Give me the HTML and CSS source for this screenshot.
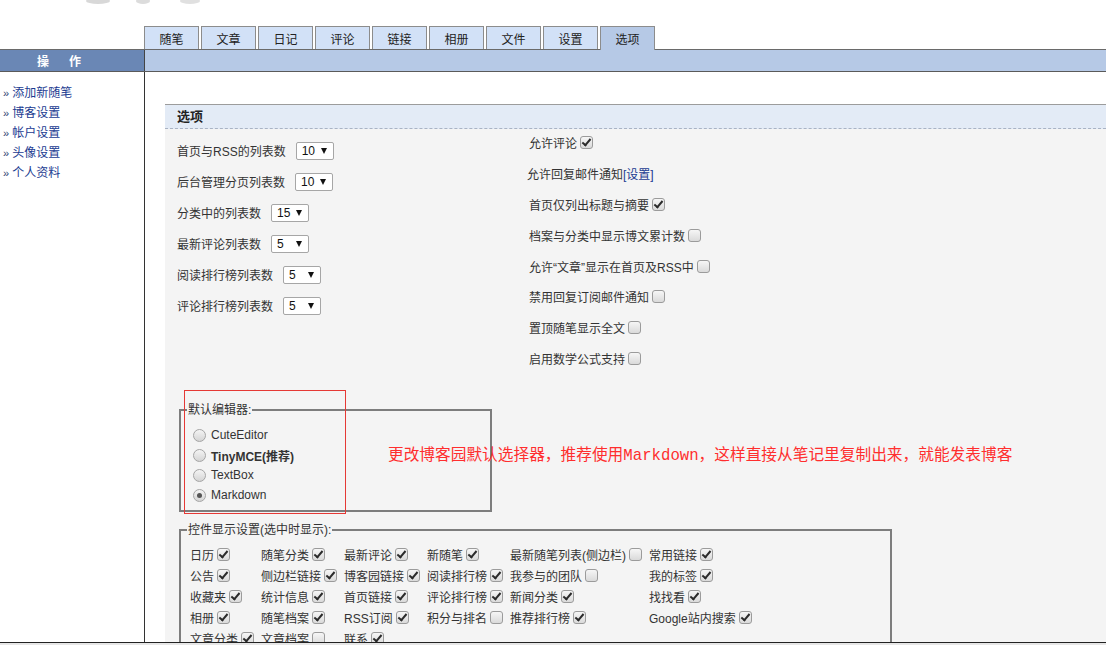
FILE: index.html
```html
<!DOCTYPE html>
<html lang="zh-CN">
<head>
<meta charset="utf-8">
<title>选项</title>
<link rel="stylesheet" href="styles.css">
</head>
<body>
<div class="logo">
  <svg class="logo-art" width="240" height="8" viewBox="0 0 240 8">
    <ellipse cx="98" cy="1" rx="12" ry="3" fill="#d8d8d8"/>
    <ellipse cx="143" cy="1" rx="7" ry="3" fill="#dcdcdc"/>
    <ellipse cx="190" cy="1" rx="10" ry="3" fill="#e0e0e0"/>
  </svg>
</div>
<div class="tabs">
  <span class="tab">随笔</span>
  <span class="tab">文章</span>
  <span class="tab">日记</span>
  <span class="tab">评论</span>
  <span class="tab">链接</span>
  <span class="tab">相册</span>
  <span class="tab">文件</span>
  <span class="tab">设置</span>
  <span class="tab active">选项</span>
</div>
<div class="bar">
  <div class="bar-left">操作</div>
  <div class="bar-right"></div>
</div>
<div class="main">
  <div class="side">
    <a href="#"><span class="r">»</span>添加新随笔</a>
    <a href="#"><span class="r">»</span>博客设置</a>
    <a href="#"><span class="r">»</span>帐户设置</a>
    <a href="#"><span class="r">»</span>头像设置</a>
    <a href="#"><span class="r">»</span>个人资料</a>
  </div>
  <div class="content">
    <div class="panel">
      <div class="phead">选项</div>
      <div class="pbody">
        <div class="cols">
          <div class="lcol">
            <div class="row"><span class="lbl">首页与RSS的列表数</span><span class="sel"><span>10</span><i></i></span></div>
            <div class="row"><span class="lbl">后台管理分页列表数</span><span class="sel"><span>10</span><i></i></span></div>
            <div class="row"><span class="lbl">分类中的列表数</span><span class="sel"><span>15</span><i></i></span></div>
            <div class="row"><span class="lbl">最新评论列表数</span><span class="sel"><span>5</span><i></i></span></div>
            <div class="row"><span class="lbl">阅读排行榜列表数</span><span class="sel"><span>5</span><i></i></span></div>
            <div class="row"><span class="lbl">评论排行榜列表数</span><span class="sel"><span>5</span><i></i></span></div>
          </div>
          <div class="rcol">
            <div class="row">允许评论<span class="cb on"></span></div>
            <div class="row shift">允许回复邮件通知<a class="lnk" href="#">[设置]</a></div>
            <div class="row">首页仅列出标题与摘要<span class="cb on"></span></div>
            <div class="row">档案与分类中显示博文累计数<span class="cb"></span></div>
            <div class="row">允许“文章”显示在首页及RSS中<span class="cb"></span></div>
            <div class="row">禁用回复订阅邮件通知<span class="cb"></span></div>
            <div class="row">置顶随笔显示全文<span class="cb"></span></div>
            <div class="row">启用数学公式支持<span class="cb"></span></div>
          </div>
        </div>
        <fieldset class="fs fs1">
          <legend>默认编辑器:</legend>
          <div class="radios">
            <div class="ritem"><span class="radio"></span>CuteEditor</div>
            <div class="ritem bold"><span class="radio"></span>TinyMCE(推荐)</div>
            <div class="ritem"><span class="radio"></span>TextBox</div>
            <div class="ritem"><span class="radio on"></span>Markdown</div>
          </div>
        </fieldset>
        <fieldset class="fs fs2">
          <legend>控件显示设置(选中时显示):</legend>
          <div class="grid">
            <div class="gi">日历<span class="cb on"></span></div>
            <div class="gi">随笔分类<span class="cb on"></span></div>
            <div class="gi">最新评论<span class="cb on"></span></div>
            <div class="gi">新随笔<span class="cb on"></span></div>
            <div class="gi">最新随笔列表(侧边栏)<span class="cb"></span></div>
            <div class="gi">常用链接<span class="cb on"></span></div>

            <div class="gi">公告<span class="cb on"></span></div>
            <div class="gi">侧边栏链接<span class="cb on"></span></div>
            <div class="gi">博客园链接<span class="cb on"></span></div>
            <div class="gi">阅读排行榜<span class="cb on"></span></div>
            <div class="gi">我参与的团队<span class="cb"></span></div>
            <div class="gi">我的标签<span class="cb on"></span></div>

            <div class="gi">收藏夹<span class="cb on"></span></div>
            <div class="gi">统计信息<span class="cb on"></span></div>
            <div class="gi">首页链接<span class="cb on"></span></div>
            <div class="gi">评论排行榜<span class="cb on"></span></div>
            <div class="gi">新闻分类<span class="cb on"></span></div>
            <div class="gi">找找看<span class="cb on"></span></div>

            <div class="gi">相册<span class="cb on"></span></div>
            <div class="gi">随笔档案<span class="cb on"></span></div>
            <div class="gi">RSS订阅<span class="cb on"></span></div>
            <div class="gi">积分与排名<span class="cb"></span></div>
            <div class="gi">推荐排行榜<span class="cb on"></span></div>
            <div class="gi">Google站内搜索<span class="cb on"></span></div>

            <div class="gi">文章分类<span class="cb on"></span></div>
            <div class="gi">文章档案<span class="cb"></span></div>
            <div class="gi">联系<span class="cb on"></span></div>
          </div>
        </fieldset>
      </div>
      <div class="anno-box"></div>
      <div class="anno-text">更改博客园默认选择器，推荐使用Markdown，这样直接从笔记里复制出来，就能发表博客</div>
    </div>
  </div>
</div>
<div class="taskbar"></div>
</body>
</html>
```

FILE: styles.css
```css
html, body {
  margin: 0;
  height: 645px;
  overflow: hidden;
  background: #fff;
}
body {
  font-family: "Liberation Sans", "Noto Sans CJK SC", sans-serif;
  font-size: 12px;
  color: #333;
}

.logo {
  height: 26px;
}
.logo-art {
  display: block;
}

/* tabs */
.tabs {
  display: flex;
  align-items: flex-start;
  gap: 2px;
  height: 23px;
  padding-left: 144px;
}
.tab {
  width: 53px;
  height: 18px;
  padding-top: 4px;
  line-height: 18px;
  border: 1px solid #8c8c8c;
  border-bottom: 0;
  background: #d2e1f7;
  text-align: center;
  color: #222;
}
.tab.active {
  height: 19px;
  background: #b6c9e6;
  position: relative;
  z-index: 1;
}

/* bar */
.bar {
  display: flex;
  height: 21px;
  border-top: 1px solid #6a6a6a;
  border-bottom: 1px solid #5a5a5a;
}
.bar-left {
  width: 144px;
  box-sizing: border-box;
  padding-left: 37px;
  background: #6a87b5;
  color: #fff;
  font-weight: bold;
  line-height: 25px;
  letter-spacing: 20px;
  overflow: hidden;
}
.bar-right {
  flex: 1;
  background: #b6c9e6;
  border-left: 1px solid #444;
}

/* main */
.main {
  display: flex;
  height: 573px;
}
.side {
  width: 144px;
  border-right: 1px solid #333;
  padding-top: 11px;
}
.side a {
  display: block;
  line-height: 20px;
  padding-left: 3px;
  color: #1b3b91;
  text-decoration: none;
}
.side .r {
  color: #2d4170;
  font-size: 11px;
  margin-right: 3px;
}

.content {
  flex: 1;
  padding: 32px 0 0 20px;
}
.panel {
  position: relative;
  height: 100%;
  border-top: 1px solid #9c9c9c;
  background: #f4f4f4;
}
.phead {
  height: 23px;
  line-height: 24px;
  padding-left: 12px;
  background: #e3ebf6;
  border-bottom: 1px dashed #a9b3c4;
  font-size: 13px;
  font-weight: bold;
  color: #222;
}
.pbody {
  padding-left: 12px;
}
.cols {
  display: flex;
}
.lcol {
  width: 352px;
  padding-top: 6px;
}
.rcol {
  margin-top: -2px;
}
.row {
  height: 31px;
  display: flex;
  align-items: center;
  white-space: nowrap;
}
.rcol .row {
  height: 30.9px;
}
.row.shift {
  margin-left: -2px;
}
.lbl {
  margin-right: 10px;
}
.lnk {
  color: #1b3b91;
  text-decoration: none;
}

/* select */
.sel {
  display: inline-flex;
  align-items: center;
  justify-content: space-between;
  box-sizing: border-box;
  width: 38px;
  height: 18px;
  padding: 0 6px 0 5px;
  border: 1px solid #a6a6a6;
  border-radius: 2px;
  background: #fff;
  color: #111;
}
.sel i {
  width: 0;
  height: 0;
  border-left: 3.5px solid transparent;
  border-right: 3.5px solid transparent;
  border-top: 6px solid #111;
}

/* checkbox */
.cb {
  display: inline-block;
  position: relative;
  box-sizing: border-box;
  width: 13px;
  height: 13px;
  margin-left: 3px;
  border: 1px solid #9b9b9b;
  border-radius: 3px;
  background: linear-gradient(#f6f6f6, #dadada);
  flex: none;
}
.cb.on::after {
  content: "";
  position: absolute;
  left: 3px;
  top: 0px;
  width: 3px;
  height: 7px;
  border: solid #2b2b2b;
  border-width: 0 2px 2px 0;
  transform: rotate(40deg);
}

/* fieldsets */
.fs {
  box-sizing: border-box;
  margin: 28px 0 0 2px;
  padding: 0 0 5px 6px;
  border: 2px solid #7d7d7d;
  min-width: 0;
}
.fs legend {
  padding: 0 1px;
  line-height: 16px;
  color: #333;
}
.fs1 {
  width: 313px;
}
.fs2 {
  width: 713px;
  margin-top: 10px;
  height: 140px;
}
.radios {
  padding: 7px 0 0 6px;
}
.ritem {
  height: 20px;
  display: flex;
  align-items: center;
  color: #333;
}
.ritem.bold {
  font-weight: bold;
}
.radio {
  position: relative;
  box-sizing: border-box;
  width: 13px;
  height: 13px;
  margin-right: 5px;
  border: 1px solid #a5a5a5;
  border-radius: 50%;
  background: linear-gradient(#f4f4f4, #d4d4d4);
}
.radio.on::after {
  content: "";
  position: absolute;
  left: 3px;
  top: 3px;
  width: 5px;
  height: 5px;
  border-radius: 50%;
  background: #555;
}

.grid {
  display: grid;
  grid-template-columns: 71px 83px 83px 83px 139px 1fr;
  grid-auto-rows: 21px;
  padding: 6px 0 0 3px;
}
.gi {
  display: flex;
  align-items: center;
  white-space: nowrap;
}

/* annotations */
.anno-box {
  position: absolute;
  left: 19px;
  top: 285px;
  width: 162px;
  height: 124px;
  box-sizing: border-box;
  border: 1px solid #e53935;
}
.anno-text {
  position: absolute;
  left: 223px;
  top: 341px;
  font-family: "Liberation Mono", "Noto Sans CJK SC", monospace;
  font-size: 15.7px;
  line-height: 20px;
  color: #ff2e2e;
  white-space: nowrap;
}

.taskbar {
  position: fixed;
  left: 0;
  right: 0;
  bottom: 0;
  height: 2px;
  border-top: 1px solid #222;
  background: #e6e6e6;
}
```
